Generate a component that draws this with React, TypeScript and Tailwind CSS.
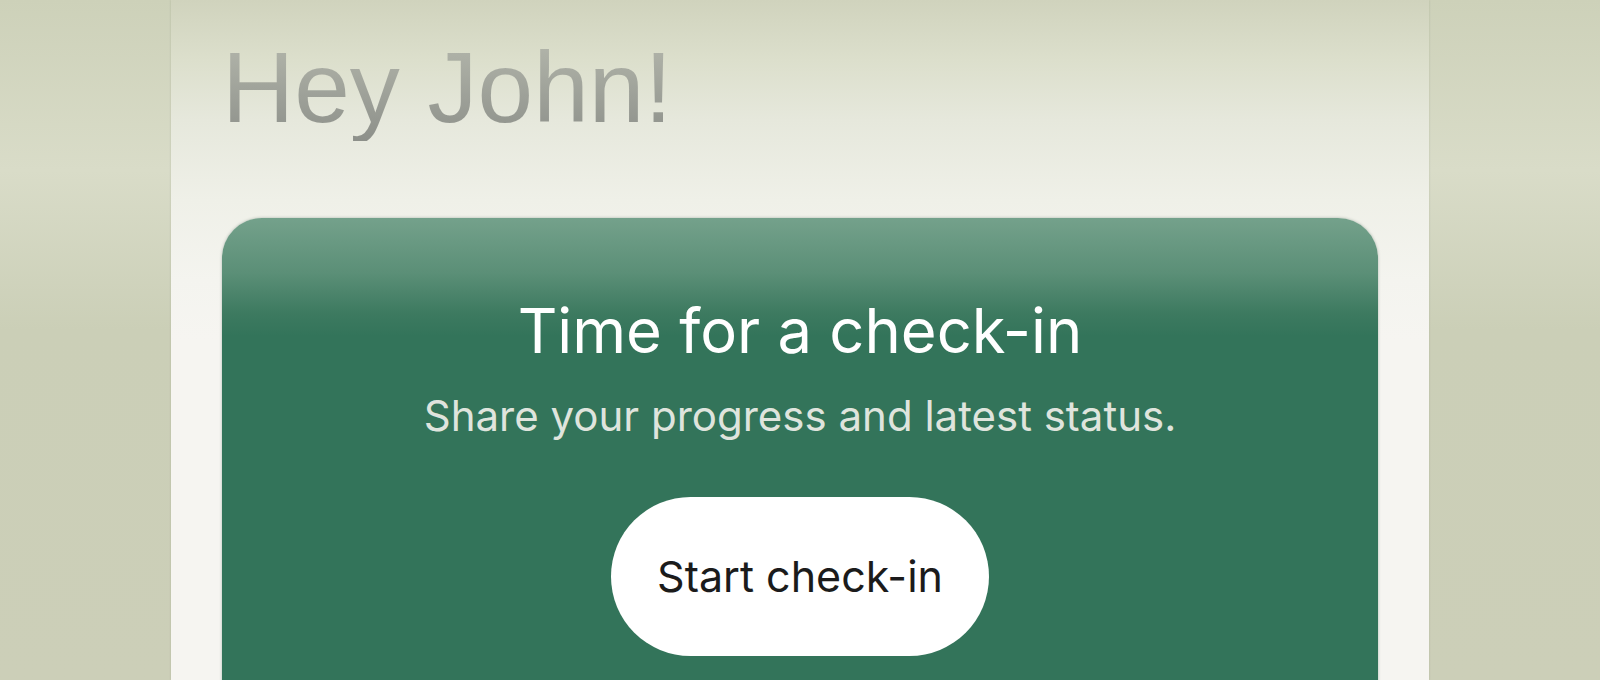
export default function App() {
  return (
    <div className="w-full h-[680px] overflow-hidden bg-[linear-gradient(180deg,#cdd1b9_0px,#d9dcc8_170px,#cbcfb7_330px,#cccfb8_100%)]">
      <main className="mx-auto w-[1258px] h-full px-[51px] pt-[37px] bg-[linear-gradient(180deg,#d0d3bd_0px,#dcdfcc_60px,#e6e8dc_120px,#eff0e8_200px,#f4f4ef_280px,#f6f5f1_340px)] shadow-[0_0_2px_rgba(120,125,100,0.3)]">
        <h1 className="text-[100px] leading-none font-['Liberation_Sans',Arial,sans-serif] bg-linear-to-b from-[#b4b7ac] to-[#8d908a] bg-clip-text text-transparent pb-1 -mb-1 w-fit">
          Hey John!
        </h1>

        <section className="mt-[81px] h-[520px] rounded-[40px] bg-[linear-gradient(180deg,#74a18b_0px,#5b8f77_55px,#3d7a60_95px,#33745a_118px,#33745a_100%)] shadow-[0_0_3px_rgba(40,70,55,0.35)] pt-[82px] flex flex-col items-center font-['Inter',sans-serif]">
          <h2 className="text-[61.5px] leading-none text-white">Time for a check-in</h2>
          <p className="mt-[33px] text-[42px] leading-none text-[#dfe4dd]">
            Share your progress and latest status.
          </p>
          <button className="mt-[60px] w-[378px] h-[159px] rounded-full bg-white flex items-center justify-center text-[43px] leading-none text-[#1b1b1b]">
            Start check-in
          </button>
        </section>
      </main>
    </div>
  );
}
